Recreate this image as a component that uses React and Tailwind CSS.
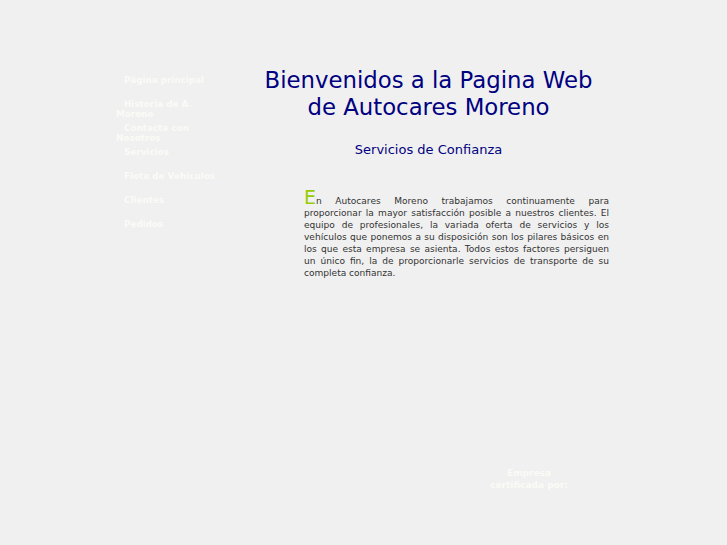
export default function App() {
  const nav = [
    "Página principal",
    "Historia de A. Moreno",
    "Contacta con Nosotros",
    "Servicios",
    "Flota de Vehiculos",
    "Clientes",
    "Pedidos",
  ];

  return (
    <div className="w-full h-[545px] bg-[#f0f0f0] font-['DejaVu_Sans',sans-serif] overflow-hidden">
      <div className="flex h-[290px] pl-[116px]">
        <ul className="w-[104px] pt-[75px] flex flex-col">
          {nav.map((item) => (
            <li key={item} className="h-[24px] text-[8.8px] leading-[10px] font-bold text-[#fbfbf6] indent-[8px]">
              <a href="#">{item}</a>
            </li>
          ))}
        </ul>

        <div className="w-[377px] ml-[20px] pt-[67px] flex flex-col">
          <h1 className="text-center text-[22.8px] leading-[27px] text-[#000080]">
            Bienvenidos a la Pagina Web
            <br />
            de Autocares Moreno
          </h1>
          <h2 className="text-center text-[13px] leading-[15px] text-[#000080] mt-[21px]">
            Servicios de Confianza
          </h2>
          <p className="ml-[64px] w-[305px] mt-[30px] text-[9.05px] leading-[12px] text-[#333333] text-justify">
            <span className="text-[19px] leading-[20px] text-[#99cc00]">E</span>n Autocares Moreno trabajamos continuamente para proporcionar la mayor satisfacción posible a nuestros clientes. El equipo de profesionales, la variada oferta de servicios y los vehículos que ponemos a su disposición son los pilares básicos en los que esta empresa se asienta. Todos estos factores persiguen un único fin, la de proporcionarle servicios de transporte de su completa confianza.
          </p>
        </div>
      </div>

      <div className="ml-[480px] w-[98px] mt-[177px] text-center text-[9px] leading-[12px] font-bold text-[#fbfbf6]">
        Empresa
        <br />
        certificada por:
      </div>
    </div>
  );
}
